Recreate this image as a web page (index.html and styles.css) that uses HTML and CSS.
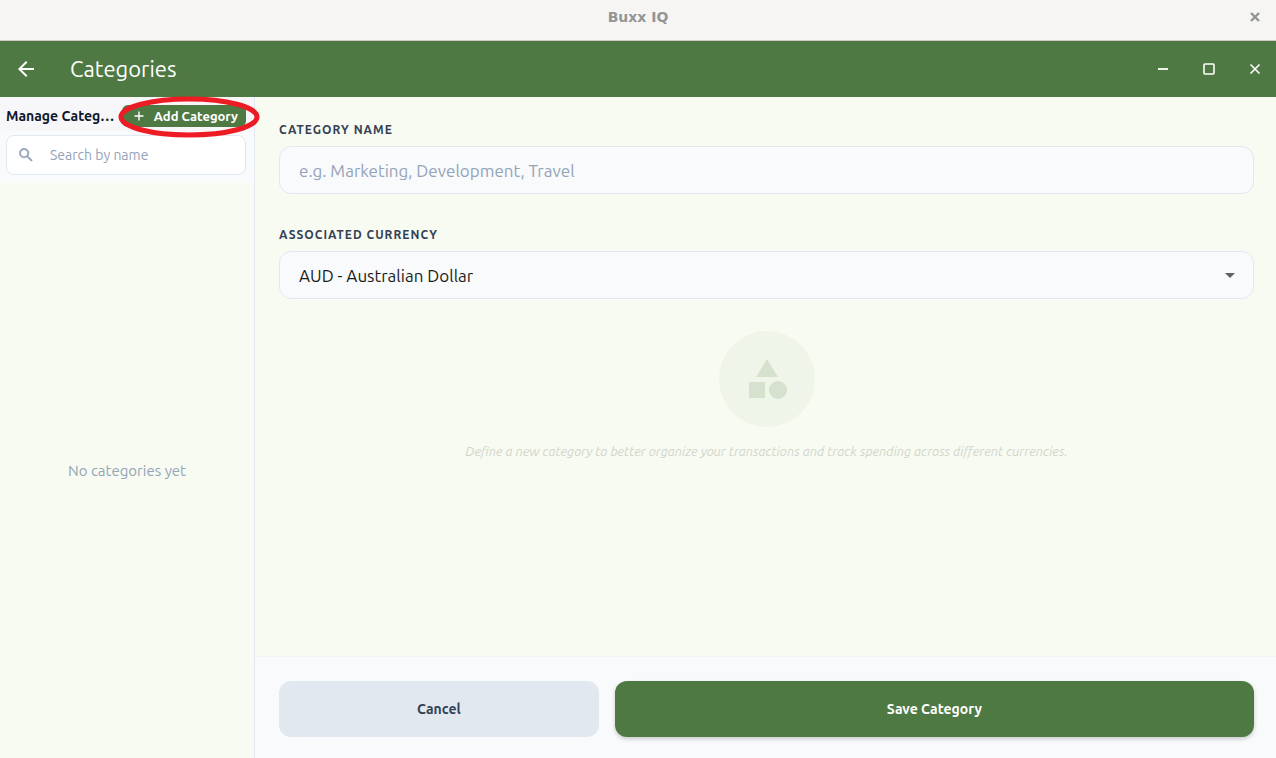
FILE: index.html
```html
<!DOCTYPE html>
<html lang="en">
<head>
  <meta charset="UTF-8" />
  <meta name="viewport" content="width=device-width, initial-scale=1" />
  <title>Buxx IQ</title>
  <link rel="stylesheet" href="styles.css">
</head>
<body>
  <div class="title-bar">
    <span>Buxx IQ</span>
    <button class="title-close" aria-label="Close window">
      <svg width="10" height="10" viewBox="0 0 10 10"><path d="M1 1l8 8M9 1l-8 8" stroke="#8f9492" stroke-width="2.400" /></svg>
    </button>
  </div>

  <header class="app-bar">
    <button class="back" aria-label="Back">
      <svg width="24" height="24" viewBox="0 0 24 24"><path fill="#fff" d="M20 11H7.830l5.590-5.590L12 4l-8 8 8 8 1.410-1.410L7.830 13H20v-2z" /></svg>
    </button>
    <h1>Categories</h1>
    <div class="window-buttons">
      <button aria-label="Minimize">
        <svg width="16" height="16" viewBox="0 0 16 16"><path d="M3 8h10" stroke="#fff" stroke-width="1.800" /></svg>
      </button>
      <button aria-label="Maximize">
        <svg width="16" height="16" viewBox="0 0 16 16"><rect x="3" y="3" width="10" height="10" rx="1" fill="none" stroke="#fff" stroke-width="1.600" /></svg>
      </button>
      <button aria-label="Close">
        <svg width="16" height="16" viewBox="0 0 16 16"><path d="M3.500 3.500l9 9M12.500 3.500l-9 9" stroke="#fff" stroke-width="1.600" /></svg>
      </button>
    </div>
  </header>

  <div class="content">
    <aside class="sidebar">
      <div class="sidebar-head">
        <h2>Manage Categories</h2>
        <div class="add-wrap">
          <button class="add">
            <svg width="10" height="10" viewBox="0 0 10 10"><path d="M5 0.500v9M0.500 5h9" stroke="#fff" stroke-width="1.400" /></svg>
            Add Category
          </button>
          <!-- red ring around the add button -->
          <svg class="ring" width="142" height="42" viewBox="0 0 142 42"><ellipse cx="71" cy="21" rx="68" ry="18" fill="none" stroke="#ed1c24" stroke-width="5" /></svg>
        </div>
      </div>
      <div class="search-area">
        <label class="search">
          <svg width="18" height="18" viewBox="0 0 24 24"><path fill="#94a3b8" stroke="#94a3b8" stroke-width="0.600" d="M15.500 14h-.79l-.28-.27A6.471 6.471 0 0 0 16 9.500 6.500 6.500 0 1 0 9.500 16c1.610 0 3.090-.59 4.230-1.570l.27.280v.79l5 4.990L20.490 19l-4.990-5zm-6 0C7.010 14 5 11.990 5 9.500S7.010 5 9.500 5 14 7.010 14 9.500 11.990 14 9.500 14z" /></svg>
          <input type="text" placeholder="Search by name" aria-label="Search by name" />
        </label>
      </div>
      <p class="empty">No categories yet</p>
    </aside>

    <main class="editor">
      <div class="fields">
        <label for="name">CATEGORY NAME</label>
        <input class="field" id="name" type="text" placeholder="e.g. Marketing, Development, Travel" />

        <label for="currency">ASSOCIATED CURRENCY</label>
        <div class="select-wrap">
          <select class="field" id="currency">
            <option>AUD - Australian Dollar</option>
          </select>
          <svg class="arrow" width="10" height="5" viewBox="0 0 10 5"><path fill="#5f635f" d="M0 0h10L5 5z" /></svg>
        </div>

        <div class="hint">
          <div class="hint-icon">
            <svg width="48" height="48" viewBox="0 0 24 24" fill="#d6e1ce"><path d="M12 2l-5.500 9h11z" /><circle cx="17.500" cy="17.500" r="4.500" /><path d="M3 13.500h8v8H3z" /></svg>
          </div>
          <p>Define a new category to better organize your transactions and track spending across different currencies.</p>
        </div>
      </div>

      <div class="actions">
        <button class="cancel">Cancel</button>
        <button class="save">Save Category</button>
      </div>
    </main>
  </div>
</body>
</html>
```

FILE: styles.css
```css
:root {
  --green: #4e7942;
  --bg: #f8fbf1;
  --panel: #f8fafc;
  --line: #e2e8f0;
  --muted: #94a3b8;
  --dark: #334155;
}

* {
  box-sizing: border-box;
}

body {
  margin: 0;
  min-height: 100vh;
  display: flex;
  flex-direction: column;
  background: var(--bg);
  font-family: Ubuntu, "Noto Sans", sans-serif;
}

button, input, select {
  font-family: inherit;
}

button {
  border: none;
  padding: 0;
  background: none;
  cursor: pointer;
}

h1, h2, p {
  margin: 0;
}

svg {
  display: block;
  flex: none;
}

.title-bar {
  display: grid;
  grid-template-columns: 1fr auto 1fr;
  align-items: center;
  height: 41px;
  padding: 0 16px 6px;
  background: #f6f5f4;
  border-bottom: 1px solid #cfcac4;
  color: #929595;
  font: bold 14px "DejaVu Sans", sans-serif;
}

.title-bar span {
  grid-column: 2;
}

.title-close {
  justify-self: end;
}

.app-bar {
  display: flex;
  align-items: center;
  height: 56px;
  padding: 0 13px 0 14px;
  background: var(--green);
  color: #fff;
}

.app-bar h1 {
  margin-left: 32px;
  font-size: 22px;
  font-weight: 400;
  line-height: 24px;
}

.window-buttons {
  display: flex;
  gap: 30px;
  margin-left: auto;
}

.content {
  flex: 1;
  display: flex;
}

.sidebar {
  flex: 0 0 255px;
  min-width: 0;
  display: flex;
  flex-direction: column;
  border-right: 1px solid var(--line);
}

.sidebar-head {
  display: flex;
  align-items: center;
  height: 34px;
  padding: 4px 8px 0 6px;
  background: #f7f7fa;
}

.sidebar-head h2 {
  flex: 1;
  min-width: 0;
  overflow: hidden;
  text-overflow: ellipsis;
  white-space: nowrap;
  color: #0f172a;
  font-size: 14px;
  font-weight: 700;
}

.add-wrap {
  position: relative;
}

.add {
  display: flex;
  align-items: center;
  gap: 10px;
  height: 22px;
  padding: 0 8px 0 12px;
  border-radius: 6px;
  background: var(--green);
  color: #fff;
  font-size: 13px;
  font-weight: 700;
  white-space: nowrap;
}

.ring {
  position: absolute;
  top: -9px;
  right: -14px;
  pointer-events: none;
}

.search-area {
  padding: 4px 8px 8px 6px;
  background: var(--panel);
}

.search {
  display: flex;
  align-items: center;
  gap: 15px;
  height: 40px;
  padding: 0 10px;
  background: #fff;
  border: 1px solid var(--line);
  border-radius: 8px;
}

.search input {
  flex: 1;
  min-width: 0;
  padding: 0;
  border: none;
  outline: none;
  background: none;
  font-size: 14px;
}

::placeholder {
  color: var(--muted);
  opacity: 1;
}

.empty {
  margin: auto;
  color: var(--muted);
  font-size: 15px;
}

.editor {
  flex: 1;
  min-width: 0;
  display: flex;
  flex-direction: column;
}

.fields {
  flex: 1;
  padding: 24px 22px 24px 24px;
}

.fields label {
  display: block;
  margin-bottom: 8px;
  color: var(--dark);
  font-size: 12px;
  font-weight: 700;
  line-height: 17px;
  letter-spacing: 1px;
}

.field {
  display: block;
  width: 100%;
  height: 48px;
  padding: 0 19px;
  background: var(--panel);
  border: 1px solid var(--line);
  border-radius: 12px;
  color: #1a1c18;
  font-size: 17px;
}

input.field {
  margin-bottom: 32px;
}

.select-wrap {
  position: relative;
}

select.field {
  appearance: none;
}

.arrow {
  position: absolute;
  top: 22px;
  right: 19px;
  pointer-events: none;
}

.hint {
  display: flex;
  flex-direction: column;
  align-items: center;
  gap: 16px;
  margin-top: 32px;
}

.hint-icon {
  display: flex;
  align-items: center;
  justify-content: center;
  width: 96px;
  height: 96px;
  border-radius: 50%;
  background: #f0f5ea;
}

.hint p {
  color: #d0d5cb;
  font-size: 13px;
  font-style: italic;
  line-height: 17px;
  text-align: center;
}

.actions {
  display: flex;
  gap: 16px;
  padding: 24px 22px 21px 24px;
  background: var(--panel);
  border-top: 1px solid #f1f5f9;
}

.actions button {
  height: 56px;
  border-radius: 12px;
  font-size: 14px;
  font-weight: 700;
}

.cancel {
  flex: 1;
  background: var(--line);
  color: var(--dark);
}

.save {
  flex: 2;
  background: var(--green);
  color: #fff;
  box-shadow: 0 2px 4px rgba(0, 0, 0, 0.2);
}
```
